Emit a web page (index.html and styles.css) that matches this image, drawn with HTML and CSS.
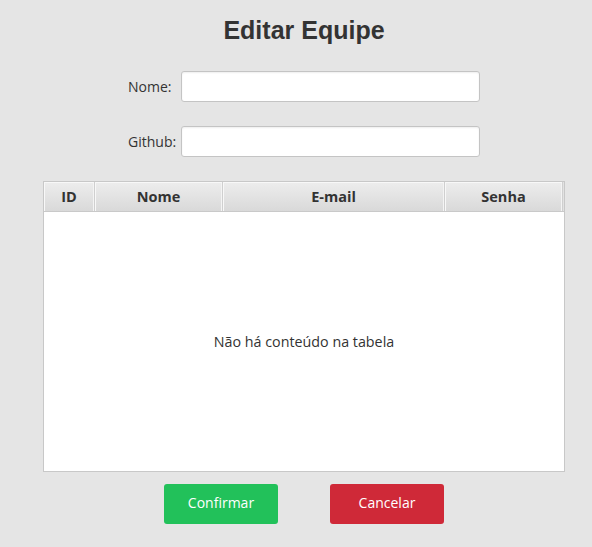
FILE: index.html
```html
<!DOCTYPE html>
<html lang="pt">
<head>
<meta charset="utf-8">
<title>Editar Equipe</title>
<link rel="stylesheet" href="styles.css">
</head>
<body>
<div class="page">
  <h1 class="title">Editar Equipe</h1>
  <div class="form">
    <label class="form-label" for="nome">Nome:</label>
    <input class="form-input" id="nome" type="text">
    <label class="form-label" for="github">Github:</label>
    <input class="form-input" id="github" type="text">
  </div>
  <div class="table">
    <div class="table-head">
      <div class="th">ID</div>
      <div class="th">Nome</div>
      <div class="th">E-mail</div>
      <div class="th">Senha</div>
    </div>
    <div class="table-body">
      <span class="placeholder">Não há conteúdo na tabela</span>
    </div>
  </div>
  <div class="actions">
    <button class="btn btn-confirm" type="button">Confirmar</button>
    <button class="btn btn-cancel" type="button">Cancelar</button>
  </div>
</div>
</body>
</html>
```
FILE: styles.css
```css
html, body {
  margin: 0;
  padding: 0;
  background: #e5e5e5;
}

body {
  font-family: "Open Sans", "Noto Sans", sans-serif;
  color: #333333;
}

.page {
  padding: 16px 0 0 16px;
  display: flex;
  flex-direction: column;
  align-items: center;
}

.title {
  margin: 0;
  font-family: "Liberation Sans", Arial, sans-serif;
  font-weight: bold;
  font-size: 25px;
  line-height: 29px;
  color: #333333;
}

.form {
  margin-top: 26px;
  display: grid;
  grid-template-columns: 53px 299px;
  grid-auto-rows: 31px;
  row-gap: 24px;
  align-items: center;
}

.form-label {
  font-size: 14px;
  color: #333333;
}

.form-input {
  box-sizing: border-box;
  width: 299px;
  height: 31px;
  margin: 0;
  padding: 0 8px;
  border: 1px solid #c4c4c4;
  border-radius: 3px;
  background: #ffffff;
  box-shadow: inset 0 1px 2px rgba(0, 0, 0, 0.07);
  font-family: inherit;
  font-size: 14px;
  outline: none;
}

.table {
  box-sizing: border-box;
  margin-top: 24px;
  width: 522px;
  height: 291px;
  border: 1px solid #c8c8c8;
  background: #ffffff;
  display: flex;
  flex-direction: column;
}

.table-head {
  display: grid;
  grid-template-columns: 51px 128px 222px 1fr;
  height: 30px;
  box-sizing: border-box;
  border-bottom: 1px solid #c9c9c9;
  background: #e2e2e2;
  padding-right: 1px;
}

.th {
  box-sizing: border-box;
  display: flex;
  align-items: center;
  justify-content: center;
  font-weight: bold;
  font-size: 14.5px;
  color: #333333;
  background: linear-gradient(#ededed, #d9d9d9);
  border-right: 1px solid #cfcfcf;
  box-shadow: inset 1px 1px 0 #f8f8f8, inset -1px 0 0 #f4f4f4;
}

.table-body {
  flex: 1;
  display: flex;
  align-items: center;
  justify-content: center;
}

.placeholder {
  font-size: 14.3px;
  color: #333333;
}

.actions {
  margin-top: 12px;
  display: flex;
  gap: 52px;
}

.btn {
  width: 114px;
  height: 40px;
  padding: 0 0 3px;
  border: none;
  border-radius: 3px;
  color: #ffffff;
  font-family: "Open Sans", "Noto Sans", sans-serif;
  font-size: 14px;
  cursor: pointer;
}

.btn-confirm {
  background: #22c15a;
}

.btn-cancel {
  background: #cf2938;
}
```
